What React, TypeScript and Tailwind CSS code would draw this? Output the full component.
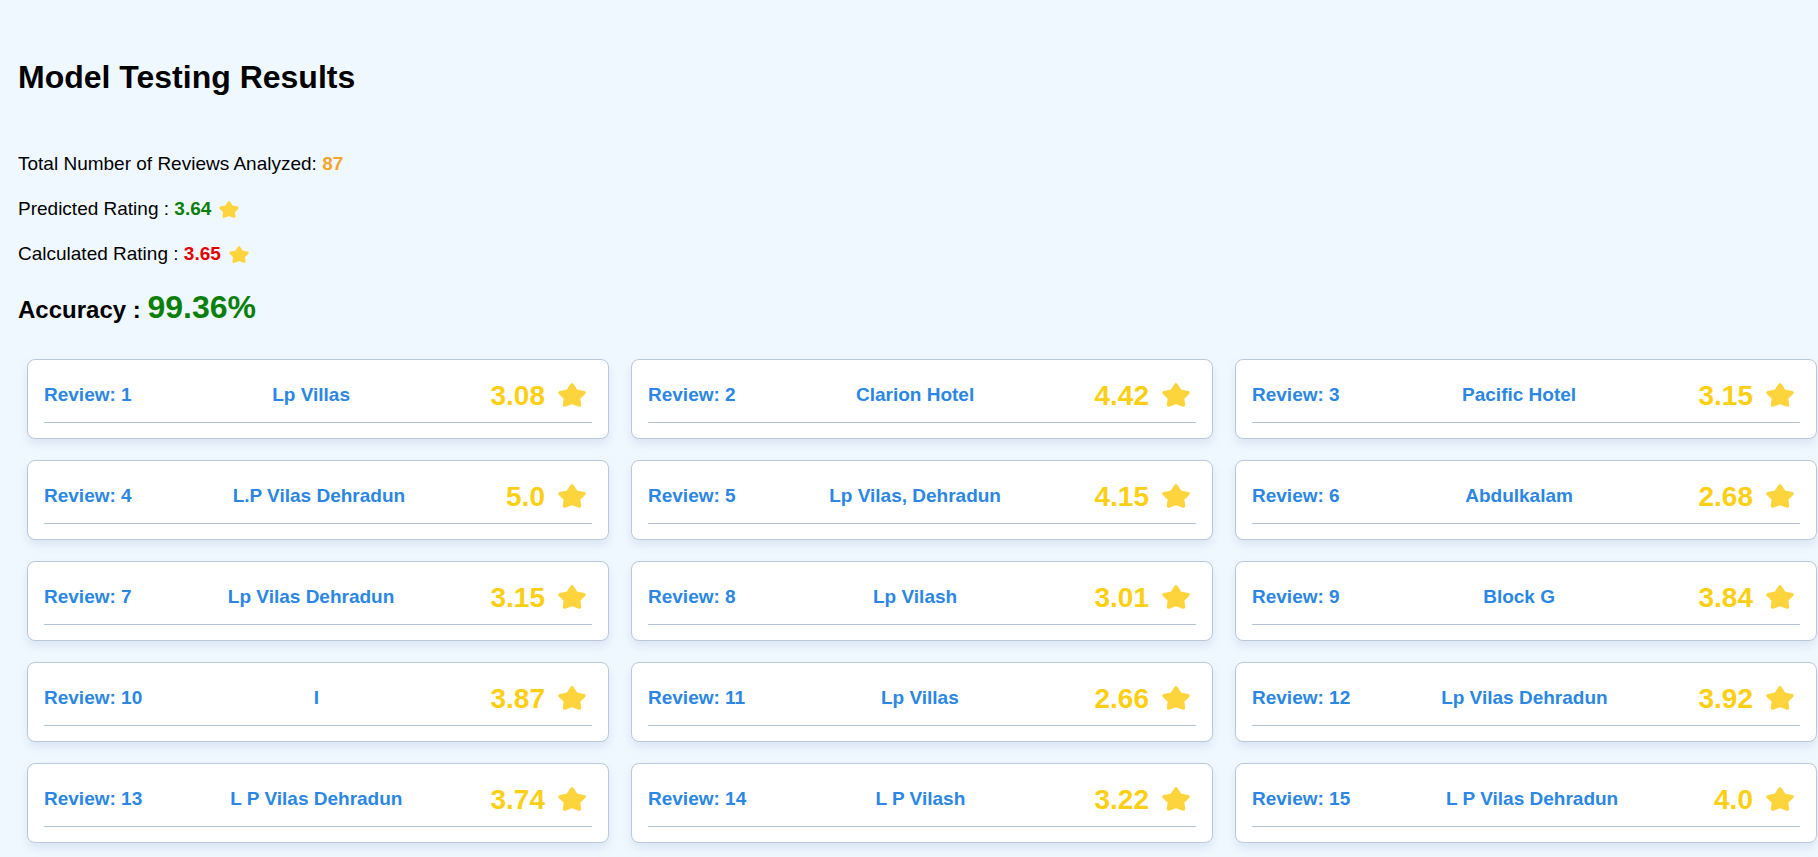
import React from "react";

const reviews: { id: number; name: string; rating: string }[] = [
  { id: 1, name: "Lp Villas", rating: "3.08" },
  { id: 2, name: "Clarion Hotel", rating: "4.42" },
  { id: 3, name: "Pacific Hotel", rating: "3.15" },
  { id: 4, name: "L.P Vilas Dehradun", rating: "5.0" },
  { id: 5, name: "Lp Vilas, Dehradun", rating: "4.15" },
  { id: 6, name: "Abdulkalam", rating: "2.68" },
  { id: 7, name: "Lp Vilas Dehradun", rating: "3.15" },
  { id: 8, name: "Lp Vilash", rating: "3.01" },
  { id: 9, name: "Block G", rating: "3.84" },
  { id: 10, name: "I", rating: "3.87" },
  { id: 11, name: "Lp Villas", rating: "2.66" },
  { id: 12, name: "Lp Vilas Dehradun", rating: "3.92" },
  { id: 13, name: "L P Vilas Dehradun", rating: "3.74" },
  { id: 14, name: "L P Vilash", rating: "3.22" },
  { id: 15, name: "L P Vilas Dehradun", rating: "4.0" },
];

function Star({ className }: { className?: string }) {
  return (
    <svg viewBox="0 0 28 24" className={className} aria-hidden="true">
      <polygon
        points="14,2 18.1,8.2 25.9,9.7 20.5,15.1 21.4,22 14,19.4 6.6,22 7.5,15.1 2.1,9.7 9.9,8.2"
        fill="#fdd43c"
        stroke="#fdd43c"
        strokeWidth="3.6"
        strokeLinejoin="round"
      />
    </svg>
  );
}

function ReviewCard({ id, name, rating }: { id: number; name: string; rating: string }) {
  return (
    <div className="bg-white border border-[#b9c9db] rounded-[8px] px-4 pt-4 pb-[15px] shadow-[0_5px_10px_rgba(120,150,190,0.18)]">
      <div className="flex items-center justify-between h-[38px] mb-2">
        <span className="text-[19px] leading-[22px] font-bold text-[#2b87e3]">Review: {id}</span>
        <span className="text-[19px] leading-[22px] font-bold text-[#2b87e3]">{name}</span>
        <span className="flex items-center mr-[6px]">
          <span className="text-[28px] leading-[32px] font-bold text-[#fccf14] translate-y-[1px]">{rating}</span>
          <Star className="w-[28px] h-[24px] ml-[13px]" />
        </span>
      </div>
      <div className="h-px bg-[#b3c3d6]" />
    </div>
  );
}

export default function App() {
  return (
    <div className="min-h-screen w-full overflow-hidden bg-[#f0f8ff] text-black font-['Liberation_Sans',Arial,sans-serif]">
      <div className="pl-[18px] pt-[59px]">
        <h1 className="text-[32px] leading-[37px] font-bold">Model Testing Results</h1>
        <div className="mt-[57px] flex flex-col gap-[23px] text-[19px] leading-[22px]">
          <p>
            Total Number of Reviews Analyzed: <span className="font-bold text-[#f5a52a]">87</span>
          </p>
          <p className="flex items-center">
            <span>
              Predicted Rating : <span className="font-bold text-[#0a800a]">3.64</span>
            </span>
            <Star className="w-[20px] h-[17px] ml-2" />
          </p>
          <p className="flex items-center">
            <span>
              Calculated Rating : <span className="font-bold text-[#e60000]">3.65</span>
            </span>
            <Star className="w-[20px] h-[17px] ml-2" />
          </p>
        </div>
        <div className="mt-[24px] flex items-baseline leading-[37px]">
          <span className="text-[24px] font-bold">Accuracy :&nbsp;</span>
          <span className="text-[32px] font-bold text-[#0a800a]">99.36%</span>
        </div>
      </div>
      <div className="pl-[27px] pt-[31px] pb-8 grid grid-cols-[repeat(3,582px)] gap-x-[22px] gap-y-[21px]">
        {reviews.map((r) => (
          <ReviewCard key={r.id} {...r} />
        ))}
      </div>
    </div>
  );
}
